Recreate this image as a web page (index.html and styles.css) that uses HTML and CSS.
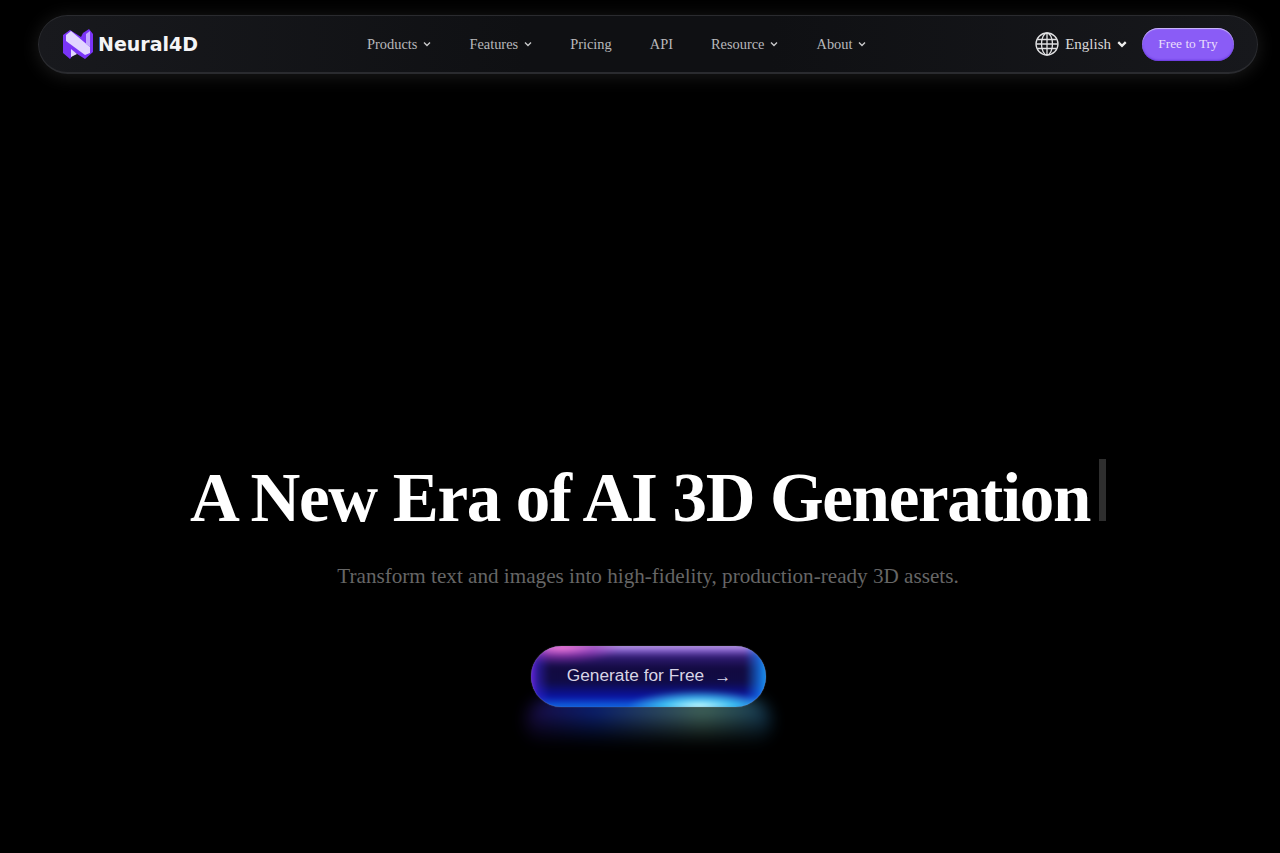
FILE: index.html
```html
<!DOCTYPE html>
<html lang="en">
<head>
    <meta charset="UTF-8">
    <meta name="viewport" content="width=device-width, initial-scale=1.0">
    <title>Neural4D</title>
    <link rel="stylesheet" href="styles.css">
</head>
<body>
    <div class="page">
        <header class="topbar">
            <a class="logo" href="#">
                <svg class="logo-mark" width="30" height="30" viewBox="0 0 30 30">
                    <path d="M0 6 L7 1 L18 8 L20 4 L26 0 L30 5 L30 23 L22 30 L11 23 L10 26 L7 30 L0 24 Z" fill="#7a34f7"/>
                    <path d="M3 6 L8 2 L27 18 L27 24 L22 26 L3 12 Z" fill="#e2d6ff"/>
                    <path d="M23 5 L27 2 L27 18 L23 15 Z" fill="#c2a6ff"/>
                    <path d="M8 20 L14 25 L8 28 Z" fill="#e2d6ff"/>
                </svg>
                <span class="logo-text">Neural4D</span>
            </a>
            <nav class="menu">
                <a href="#">Products <svg class="caret" viewBox="0 0 8 6"><path d="M1 1.5 L4 4.5 L7 1.5"/></svg></a>
                <a href="#">Features <svg class="caret" viewBox="0 0 8 6"><path d="M1 1.5 L4 4.5 L7 1.5"/></svg></a>
                <a href="#">Pricing</a>
                <a href="#">API</a>
                <a href="#">Resource <svg class="caret" viewBox="0 0 8 6"><path d="M1 1.5 L4 4.5 L7 1.5"/></svg></a>
                <a href="#">About <svg class="caret" viewBox="0 0 8 6"><path d="M1 1.5 L4 4.5 L7 1.5"/></svg></a>
            </nav>
            <div class="actions">
                <a class="lang" href="#">
                    <svg class="globe" width="24" height="24" viewBox="0 0 24 24">
                        <circle cx="12" cy="12" r="11"/>
                        <ellipse cx="12" cy="12" rx="5.5" ry="11"/>
                        <path d="M12 1 V23 M2.2 7.5 H21.8 M2.2 16.5 H21.8 M1 12 H23"/>
                    </svg>
                    <span>English</span>
                    <svg class="caret caret-lang" viewBox="0 0 8 6"><path d="M1 1.5 L4 4.5 L7 1.5"/></svg>
                </a>
                <a class="try-btn" href="#">Free to Try</a>
            </div>
        </header>

        <main class="hero">
            <h1>A New Era of AI 3D Generation<span class="cursor"></span></h1>
            <p>Transform text and images into high-fidelity, production-ready 3D assets.</p>
            <div class="cta-wrap">
                <div class="cta-glow"></div>
                <a class="cta" href="#"><span class="cta-label">Generate for Free</span> <span class="arrow">→</span></a>
            </div>
        </main>
    </div>
</body>
</html>
```

FILE: styles.css
```css
html, body {
    margin: 0;
    padding: 0;
    background-color: #000000;
    height: 100%;
    overflow: hidden;
}

body {
    font-family: "Liberation Serif", "Times New Roman", serif;
    color: #ffffff;
}

a {
    color: inherit;
    text-decoration: none;
}

.page {
    padding: 15px 22px 0 38px;
}

/* top bar */
.topbar {
    display: flex;
    align-items: center;
    height: 59px;
    box-sizing: border-box;
    padding: 0 23px 0 24px;
    border: 1px solid #2a2b2f;
    border-bottom-width: 2px;
    border-radius: 30px;
    background: linear-gradient(90deg, #18191d 0%, #0f1013 40%, #0f1013 60%, #17181c 100%);
    box-shadow: 0 2px 18px rgba(255, 255, 255, 0.11);
}

.logo {
    display: flex;
    align-items: center;
    gap: 5px;
}

.logo-text {
    font-family: "DejaVu Sans", sans-serif;
    font-weight: 700;
    font-size: 19px;
    color: #f4f4f6;
}

.menu {
    display: flex;
    align-items: center;
    gap: 38px;
    margin-left: 169px;
    font-size: 14.4px;
    color: #b8b8bb;
}

.menu a {
    display: flex;
    align-items: center;
    gap: 6px;
}

.caret {
    width: 8px;
    height: 6px;
    fill: none;
    stroke: #c8c8ca;
    stroke-width: 1.4;
}

.actions {
    display: flex;
    align-items: center;
    gap: 15px;
    margin-left: auto;
}

.lang {
    display: flex;
    align-items: center;
    gap: 6px;
    font-size: 15px;
    color: #d8d8da;
}

.globe {
    fill: none;
    stroke: #e0e0e2;
    stroke-width: 1.3;
}

.caret-lang {
    width: 10px;
    height: 8px;
    stroke: #eeeeee;
    stroke-width: 1.8;
}

.try-btn {
    display: block;
    width: 92px;
    height: 33px;
    line-height: 31px;
    text-align: center;
    font-size: 13.4px;
    color: #e9defc;
    border-radius: 17px;
    background-color: #8a5cf6;
    box-shadow: inset 0 1px 1px rgba(255, 255, 255, 0.6), inset 0 -1px 2px rgba(90, 40, 210, 0.7);
}

/* hero */
.hero {
    display: flex;
    flex-direction: column;
    align-items: center;
    text-align: center;
    padding-top: 385px;
}

.hero h1 {
    margin: 0;
    display: flex;
    align-items: flex-start;
    font-size: 69px;
    line-height: 79px;
    font-weight: 700;
    letter-spacing: -1.35px;
}

.cursor {
    display: block;
    width: 7px;
    height: 62px;
    margin: 0 0 0 9px;
    background-color: #2e2e2e;
}

.hero p {
    margin: 23px 0 0;
    font-size: 21.15px;
    line-height: 30px;
    color: #666666;
}

.cta-wrap {
    position: relative;
    margin-top: 55px;
    width: 235px;
    height: 61px;
}

.cta {
    position: relative;
    display: flex;
    align-items: center;
    justify-content: center;
    gap: 10px;
    box-sizing: border-box;
    height: 61px;
    padding: 0 0 2px 2px;
    border-radius: 31px;
    font-family: "Liberation Sans", Arial, sans-serif;
    font-size: 17.3px;
    color: #d8d4e6;
    overflow: hidden;
    background-color: #150c48;
    box-shadow: 0 0 1px rgba(255, 255, 255, 0.6);
}

/* the colour of the pill is a blurred stack of gradients */
.cta::before {
    content: "";
    position: absolute;
    inset: -3px;
    background:
        radial-gradient(ellipse 72px 17px at 71% 95%, rgba(205, 255, 255, 1) 0%, rgba(70, 215, 250, 0.8) 50%, rgba(40, 120, 255, 0) 100%),
        radial-gradient(ellipse 60px 18px at 14% 5%, rgba(245, 120, 215, 0.95) 0%, rgba(170, 50, 180, 0.5) 55%, rgba(90, 40, 170, 0) 100%),
        linear-gradient(90deg, rgba(130, 40, 255, 1) 0%, rgba(60, 40, 220, 0.5) 4%, rgba(60, 40, 220, 0) 9%, rgba(20, 80, 255, 0) 90%, rgba(20, 130, 255, 0.7) 96%, rgba(30, 170, 255, 1) 100%),
        linear-gradient(180deg, #e0c4f8 0%, #8a64d0 10%, #2e1a70 21%, #120a40 38%, #100b45 58%, #0a12a0 80%, #1280f8 100%);
    filter: blur(2.5px);
}

/* thin bright rim on top of the blur */
.cta::after {
    content: "";
    position: absolute;
    inset: 0;
    border-radius: 31px;
    box-shadow: inset 0 0 1px rgba(220, 240, 255, 0.5);
}

.cta-label,
.arrow {
    position: relative;
    z-index: 1;
}

.arrow {
    font-size: 17px;
    margin-top: 3px;
}

.cta-glow {
    position: absolute;
    left: -5px;
    right: -5px;
    top: 52px;
    height: 50px;
    border-radius: 30px;
    opacity: 0.62;
    background:
        linear-gradient(180deg, rgba(0, 0, 0, 0) 20%, #000000 92%),
        linear-gradient(90deg, rgba(70, 30, 170, 0.7) 0%, rgba(20, 60, 210, 0.95) 28%, rgba(130, 200, 180, 0.9) 72%, rgba(40, 130, 200, 0.75) 100%);
    filter: blur(8px);
}
```
